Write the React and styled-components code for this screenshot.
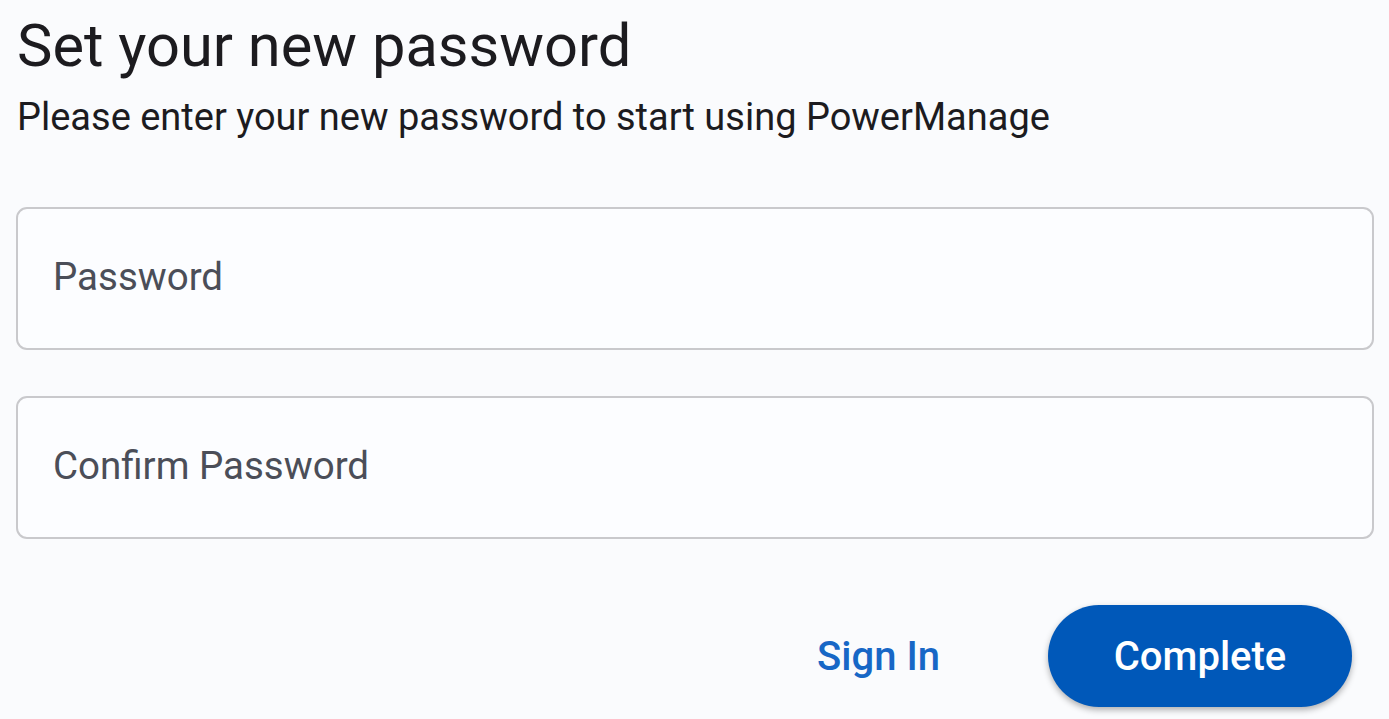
import styled, { createGlobalStyle } from "styled-components";

const GlobalStyle = createGlobalStyle`
    html, body {
        margin: 0;
        padding: 0;
        background: #fafbfd;
        font-family: Roboto, "Liberation Sans", sans-serif;
    }
`;

const Page = styled.div`
    padding: 12px 15px 0 16px;
    box-sizing: border-box;
    width: 1389px;
    height: 719px;
    overflow: hidden;
`;

const Title = styled.h1`
    margin: 0 0 0 1px;
    font-size: 59.6px;
    font-weight: 400;
    line-height: 69px;
    color: #1c1b1f;
`;

const Subtitle = styled.p`
    margin: 14px 0 0 1px;
    font-size: 38px;
    line-height: 45px;
    color: #1c1b1f;
`;

const Fields = styled.div`
    display: flex;
    flex-direction: column;
    gap: 46px;
    margin-top: 67px;
`;

const Field = styled.div`
    height: 143px;
    border: 2px solid #c9c9cc;
    border-radius: 11px;
    box-sizing: border-box;
    display: flex;
    align-items: center;
    padding: 0 35px;
    background: #fcfdff;
`;

const Label = styled.span`
    font-size: 38.5px;
    color: #4b4e58;
    margin-top: -5px;
`;

const Actions = styled.div`
    display: flex;
    justify-content: flex-end;
    align-items: center;
    gap: 108px;
    margin-top: 66px;
    padding-right: 22px;
`;

const TextButton = styled.button`
    border: none;
    background: none;
    padding: 0;
    font-family: inherit;
    font-size: 40px;
    font-weight: 500;
    color: #1767c6;
    cursor: pointer;
`;

const PrimaryButton = styled.button`
    border: none;
    width: 304px;
    height: 102px;
    border-radius: 51px;
    background: #0058b9;
    color: #ffffff;
    font-family: inherit;
    font-size: 40px;
    font-weight: 500;
    box-shadow: 0 3px 6px rgba(0, 0, 0, 0.3);
    cursor: pointer;
`;

export default function App() {
    return (
        <Page>
            <GlobalStyle />
            <Title>Set your new password</Title>
            <Subtitle>Please enter your new password to start using PowerManage</Subtitle>
            <Fields>
                <Field>
                    <Label>Password</Label>
                </Field>
                <Field>
                    <Label>Confirm Password</Label>
                </Field>
            </Fields>
            <Actions>
                <TextButton>Sign In</TextButton>
                <PrimaryButton>Complete</PrimaryButton>
            </Actions>
        </Page>
    );
}
